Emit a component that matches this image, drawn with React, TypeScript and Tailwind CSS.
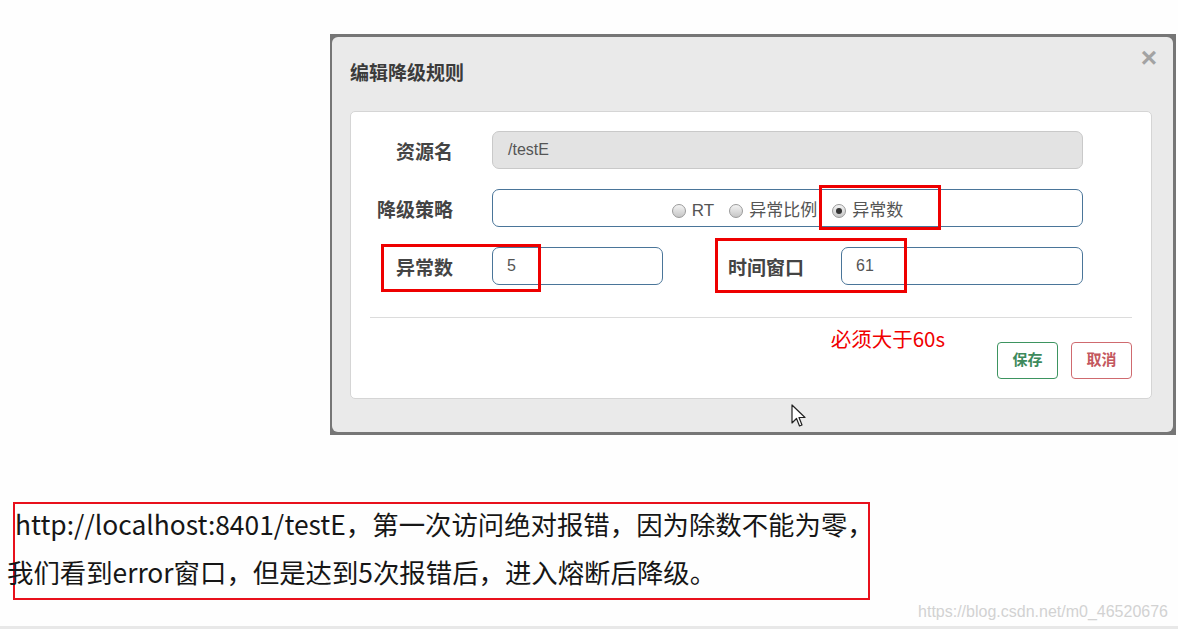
import React from "react";

const cjk = { fontFamily: '"Liberation Sans", "Noto Sans CJK SC", sans-serif' };
const yahei = { fontFamily: '"Noto Sans CJK SC", "Noto Sans", sans-serif' };

function Radio({ checked, label }: { checked?: boolean; label: string }) {
  return (
    <span className="flex items-center gap-[6px]">
      <span className="flex h-[14px] w-[14px] items-center justify-center rounded-full border border-[#9a9a9a] bg-gradient-to-b from-[#f4f4f4] to-[#c6c6c6]">
        {checked && <span className="h-[6px] w-[6px] rounded-full bg-[#333]" />}
      </span>
      <span>{label}</span>
    </span>
  );
}

function Cursor() {
  return (
    <svg width="16" height="25" viewBox="0 0 16 25" className="absolute left-[791px] top-[404px]">
      <path
        d="M1 1 L1 19 L5.5 14.5 L8.5 22 L11 21 L8 13.5 L14 13.5 Z"
        fill="#fff"
        stroke="#222"
        strokeWidth="1.2"
        strokeLinejoin="round"
      />
    </svg>
  );
}

export default function App() {
  return (
    <div className="relative flex h-[629px] w-[1178px] flex-col overflow-hidden bg-[#fefefe]" style={cjk}>
      {/* modal */}
      <div className="ml-[330px] mt-[34px] h-[401px] w-[846px] bg-[#767676] pb-[3px] pl-[2px] pr-[3px] pt-[3px]">
        <div className="flex h-full flex-col rounded-[6px] bg-[#eaeaea] px-[18px]">
          <div className="flex h-[74px] items-start justify-between">
            <span className="pt-[23px] text-[19px] font-bold text-[#3b3b3b]">编辑降级规则</span>
            <span className="mr-[-2px] pt-[7px] text-[28px] font-bold leading-none text-[#a3a3a3]">×</span>
          </div>

          <div className="mr-[3px] flex h-[288px] flex-col rounded-[5px] border border-[#d5d5d5] bg-white px-[19px] pt-[19px] text-[#444]">
            <div className="flex h-[38px] items-center">
              <span className="w-[84px] pr-[1px] pt-[7px] text-right text-[19px] font-bold">资源名</span>
              <div className="ml-[38px] flex h-[38px] w-[591px] items-center rounded-[7px] border border-[#c9c9c9] bg-[#e3e3e3] px-[15px] text-[16px] text-[#555]">
                /testE
              </div>
            </div>

            <div className="mt-[20px] flex h-[38px] items-center">
              <span className="w-[84px] pr-[1px] pt-[7px] text-right text-[19px] font-bold">降级策略</span>
              <div className="ml-[38px] flex h-[38px] w-[591px] items-center justify-center gap-[15px] rounded-[7px] border border-[#4a7599] pt-[6px] text-[17px] text-[#555]">
                <Radio label="RT" />
                <Radio label="异常比例" />
                <Radio label="异常数" checked />
              </div>
            </div>

            <div className="mt-[20px] flex h-[38px] items-center">
              <span className="w-[84px] pr-[1px] pt-[7px] text-right text-[19px] font-bold">异常数</span>
              <div className="ml-[38px] flex h-[38px] w-[171px] items-center rounded-[7px] border border-[#4a7599] px-[14px] text-[16px] text-[#555]">
                5
              </div>
              <span className="w-[141px] pt-[7px] text-right text-[19px] font-bold">时间窗口</span>
              <div className="ml-[37px] flex h-[38px] w-[242px] items-center rounded-[7px] border border-[#4a7599] px-[14px] text-[16px] text-[#555]">
                61
              </div>
            </div>

            <div className="mt-[32px] h-px bg-[#dcdcdc]" />

            <div className="mt-[5px] flex items-start justify-end">
              <span className="mr-[52px] text-[20.5px] text-[#f00000]" style={yahei}>
                必须大于60s
              </span>
              <button className="mt-[19px] h-[37px] w-[61px] rounded-[4px] border border-[#3d9460] text-[15px] font-bold text-[#3d8a5c]">
                保存
              </button>
              <button className="ml-[13px] mt-[19px] h-[37px] w-[61px] rounded-[4px] border border-[#cf6a6f] text-[15px] font-bold text-[#c4585e]">
                取消
              </button>
            </div>
          </div>
        </div>
      </div>

      {/* bottom note */}
      <div className="ml-[13px] mt-[67px] flex h-[98px] w-[857px] flex-col border-2 border-[#e8101c] text-[#161616]" style={yahei}>
        <div className="h-[48px] whitespace-nowrap text-[26.4px] leading-[40px]">
          http://localhost:8401/testE，第一次访问绝对报错，因为除数不能为零，
        </div>
        <div className="-ml-[8px] whitespace-nowrap text-[26.4px] leading-[40px]">
          我们看到error窗口，但是达到5次报错后，进入熔断后降级。
        </div>
      </div>

      <div className="flex justify-end pr-[10px] text-[16px] text-[#d2d2d2]" style={{ fontFamily: '"Liberation Sans", sans-serif' }}>
        https://blog.csdn.net/m0_46520676
      </div>

      <div className="mt-auto h-[3px] bg-[#e8e8e8]" />

      {/* annotations */}
      <div className="absolute left-[819px] top-[185px] h-[45px] w-[122px] border-[3px] border-[#ee0000]" />
      <div className="absolute left-[381px] top-[244px] h-[48px] w-[160px] border-[3px] border-[#ee0000]" />
      <div className="absolute left-[715px] top-[238px] h-[55px] w-[192px] border-[3px] border-[#ee0000]" />
      <Cursor />
    </div>
  );
}
